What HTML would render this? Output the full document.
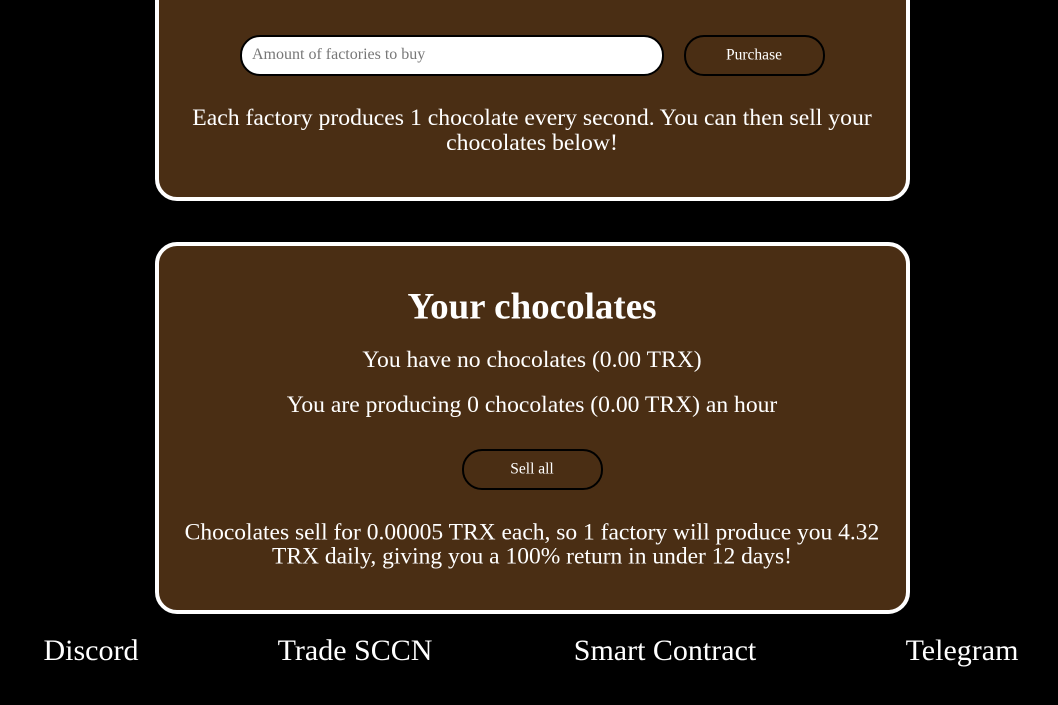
<!DOCTYPE html>
<html><head><meta charset="utf-8"><style>
html,body{margin:0;padding:0;background:#000;width:1058px;height:705px;overflow:hidden;font-family:"Liberation Serif","DejaVu Serif",serif;color:#fff}
.box{position:absolute;left:155px;width:747px;background:#4a2e14;border:4px solid #fff;border-radius:22px}
.t{position:absolute;white-space:nowrap;transform:translate(-50%,-50%);line-height:1}
.inp{position:absolute;left:240px;top:35px;width:420px;height:37px;background:#fff;border:2px solid #000;border-radius:20px}
.btn{position:absolute;border:2px solid #000;border-radius:20px;box-sizing:border-box}
</style></head><body>
<div class="box" style="top:-30px;height:223px"></div>
<div class="inp"></div>
<div class="t" style="left:252px;transform:translateY(-50%);top:55px;font-size:16px;color:#777;">Amount of factories to buy</div>
<div class="btn" style="left:684px;top:35px;width:141px;height:41px"></div>
<div class="t" style="left:754px;top:55px;font-size:15.5px">Purchase</div>
<div class="t" style="left:532px;top:119px;font-size:23.7px">Each factory produces 1 chocolate every second. You can then sell your</div>
<div class="t" style="left:532px;top:144px;font-size:23.7px">chocolates below!</div>

<div class="box" style="top:242px;height:364px"></div>
<div class="t" style="left:532px;top:307px;font-size:37px;font-weight:bold">Your chocolates</div>
<div class="t" style="left:532px;top:361px;font-size:23.6px">You have no chocolates (0.00 TRX)</div>
<div class="t" style="left:532px;top:406px;font-size:23.6px">You are producing 0 chocolates (0.00 TRX) an hour</div>
<div class="btn" style="left:462px;top:449px;width:141px;height:41px"></div>
<div class="t" style="left:532px;top:469px;font-size:15.5px">Sell all</div>
<div class="t" style="left:532px;top:533px;font-size:23.5px">Chocolates sell for 0.00005 TRX each, so 1 factory will produce you 4.32</div>
<div class="t" style="left:532px;top:557px;font-size:23.5px">TRX daily, giving you a 100% return in under 12 days!</div>

<div class="t" style="left:91px;top:651px;font-size:30px">Discord</div>
<div class="t" style="left:355px;top:651px;font-size:30px">Trade SCCN</div>
<div class="t" style="left:665px;top:651px;font-size:30px">Smart Contract</div>
<div class="t" style="left:962px;top:651px;font-size:30px">Telegram</div>
</body></html>
